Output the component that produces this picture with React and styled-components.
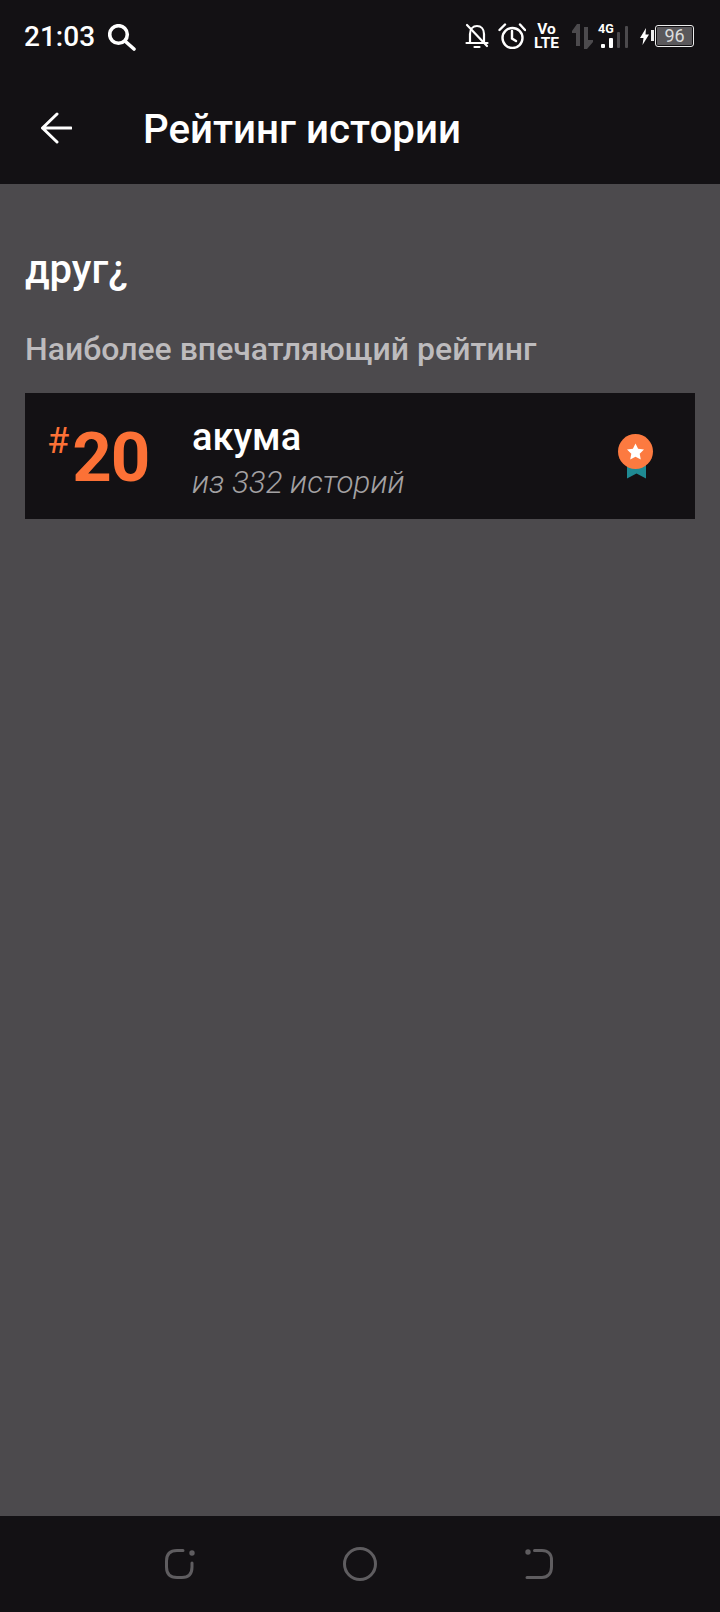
import React from "react";
import styled, { createGlobalStyle } from "styled-components";

const GlobalStyle = createGlobalStyle`
  html, body {
    margin: 0;
    padding: 0;
    background: #4c4a4d;
  }
  body {
    font-family: Roboto, "Noto Sans", sans-serif;
  }
`;

const Page = styled.div`
  width: 720px;
  height: 1612px;
  display: flex;
  flex-direction: column;
  background: #4c4a4d;
  overflow: hidden;
`;

const Top = styled.div`
  height: 184px;
  flex: none;
  background: #131114;
  display: flex;
  flex-direction: column;
`;

const StatusBar = styled.div`
  height: 74px;
  flex: none;
  padding: 0 26px 0 24px;
  display: flex;
  align-items: center;
  justify-content: space-between;
`;

const StatusLeft = styled.div`
  display: flex;
  align-items: center;
  gap: 13px;
`;

const Clock = styled.span`
  color: #fff;
  font-size: 28px;
  font-weight: 500;
  line-height: 32px;
`;

const StatusRight = styled.div`
  display: flex;
  align-items: center;
  margin-bottom: 2px;
`;

const StatusIcon = styled.svg`
  display: block;
  flex: none;
  margin-left: ${(p) => p.$gap || 0}px;
`;

const Volte = styled.div`
  margin-left: 7px;
  width: 27px;
  color: #fff;
  font-size: 15.5px;
  font-weight: 700;
  line-height: 14px;
  text-align: center;
`;

const Signal = styled.div`
  margin-left: 5px;
  width: 30px;
  display: flex;
  flex-direction: column;
  color: #fff;
`;

const SignalLabel = styled.span`
  font-size: 12.5px;
  font-weight: 700;
  line-height: 11px;
`;

const SignalBars = styled.svg`
  display: block;
  margin-top: -8px;
`;

const Battery = styled.div`
  margin-left: 6px;
  position: relative;
  width: 39px;
  height: 22px;
  box-sizing: border-box;
  border: 1.5px solid #eee;
  border-radius: 3px;
  padding: 1px;
  display: flex;

  &::before {
    content: "";
    position: absolute;
    left: -5px;
    top: 4px;
    width: 3px;
    height: 11px;
    background: #eee;
  }
`;

const BatteryFill = styled.div`
  flex: 1;
  background: #5a585b;
  border-radius: 1px;
  color: #ddd;
  font-size: 18px;
  line-height: 17px;
  text-align: center;
`;

const AppBar = styled.div`
  flex: 1;
  display: flex;
  align-items: center;
  padding-left: 40px;
`;

const BackIcon = styled.svg`
  display: block;
  flex: none;
  margin-bottom: 2px;
`;

const Title = styled.h1`
  margin: 2px 0 0 71px;
  color: #fff;
  font-size: 40.3px;
  font-weight: 500;
  line-height: 44px;
`;

const Content = styled.main`
  flex: 1;
  padding: 64px 25px 0;
`;

const StoryName = styled.h2`
  margin: 0;
  color: #fff;
  font-size: 40px;
  font-weight: 500;
  line-height: 44px;
`;

const Caption = styled.div`
  margin-top: 39px;
  color: #bdbbbd;
  font-size: 32px;
  font-weight: 500;
  line-height: 36px;
`;

const RankCard = styled.div`
  margin-top: 26px;
  height: 126px;
  background: #131114;
  display: flex;
  align-items: center;
`;

const Rank = styled.div`
  width: 167px;
  flex: none;
  align-self: stretch;
  padding: 25px 0 0 22px;
  box-sizing: border-box;
  display: flex;
  align-items: flex-start;
  color: #fc7136;
`;

const Hash = styled.span`
  font-size: 36px;
  line-height: 40px;
  margin-top: 3px;
`;

const RankNumber = styled.span`
  font-size: 69px;
  font-weight: 700;
  line-height: 80px;
  letter-spacing: -1px;
  margin-left: 3px;
`;

const RankText = styled.div`
  flex: 1;
  padding-top: 3px;
`;

const Category = styled.div`
  color: #fff;
  font-size: 38px;
  font-weight: 500;
  line-height: 44px;
`;

const Total = styled.div`
  color: #a3a1a3;
  font-size: 31.3px;
  font-weight: 300;
  font-style: italic;
  line-height: 36px;
  margin-top: 6px;
`;

const Medal = styled.svg`
  flex: none;
  margin-right: 41px;
`;

const NavBar = styled.nav`
  height: 96px;
  flex: none;
  box-sizing: border-box;
  padding-right: 2px;
  background: #131114;
  display: flex;
  align-items: center;
  justify-content: center;
  gap: 148px;
`;

const BellOff = () => (
  <StatusIcon width="24" height="26" viewBox="0 0 24 26" fill="none" stroke="#fff" strokeWidth="2.2" strokeLinecap="round">
    <path d="M5 20V11c0-5 3-8 7-8s7 3 7 8v9M1.500 20h21M9.500 24h5" />
    <path d="M2 2l20 21" />
  </StatusIcon>
);

const Alarm = () => (
  <StatusIcon $gap={9} width="28" height="26" viewBox="0 0 28 26" fill="none" stroke="#fff" strokeWidth="2.4" strokeLinecap="round">
    <circle cx="14.500" cy="15" r="10" />
    <path d="M14 8v7.500l4 2.500M1.500 7L7 1.500M22 1.500L27 7" />
  </StatusIcon>
);

const DataArrows = () => (
  <StatusIcon $gap={12} width="21" height="25" viewBox="0 0 21 25" fill="#4c4a4d">
    <path d="M5 0L0 7v2h4v13h4V0zM12 3h4v13h5v2l-6 7h-3z" />
  </StatusIcon>
);

const Bolt = () => (
  <StatusIcon $gap={12} width="9" height="17" viewBox="0 0 9 17" fill="#fff">
    <path d="M6 0L0 10h3.500L2.500 17 9 6.500H5.500z" />
  </StatusIcon>
);

const App = () => {
  return (
    <Page>
      <GlobalStyle />
      <Top>
        <StatusBar>
          <StatusLeft>
            <Clock>21:03</Clock>
            <svg width="28" height="27" viewBox="0 0 28 27" fill="none" stroke="#fff" strokeWidth="3.6" strokeLinecap="round">
              <circle cx="10.500" cy="10.500" r="8.800" />
              <path d="M17.500 17.500l8.500 7.500" />
            </svg>
          </StatusLeft>
          <StatusRight>
            <BellOff />
            <Alarm />
            <Volte>Vo LTE</Volte>
            <DataArrows />
            <Signal>
              <SignalLabel>4G</SignalLabel>
              <SignalBars width="30" height="23" viewBox="0 0 30 23">
                <rect x="3" y="18" width="4" height="4" rx="1" fill="#fff" />
                <rect x="11" y="12" width="4" height="10" rx="1" fill="#fff" />
                <rect x="19" y="6" width="3" height="16" rx="1" fill="#4c4a4d" />
                <rect x="27" y="0" width="3" height="22" rx="1" fill="#4c4a4d" />
              </SignalBars>
            </Signal>
            <Bolt />
            <Battery>
              <BatteryFill>96</BatteryFill>
            </Battery>
          </StatusRight>
        </StatusBar>
        <AppBar>
          <BackIcon width="32" height="32" viewBox="0 0 32 32" fill="none" stroke="#fff" strokeWidth="3" strokeLinecap="round" strokeLinejoin="round">
            <path d="M31 16H2.500M17 2L2.500 16 17 30" />
          </BackIcon>
          <Title>Рейтинг истории</Title>
        </AppBar>
      </Top>
      <Content>
        <StoryName>друг¿</StoryName>
        <Caption>Наиболее впечатляющий рейтинг</Caption>
        <RankCard>
          <Rank>
            <Hash>#</Hash>
            <RankNumber>20</RankNumber>
          </Rank>
          <RankText>
            <Category>акума</Category>
            <Total>из 332 историй</Total>
          </RankText>
          <Medal width="36" height="45" viewBox="0 0 36 45">
            <path d="M9 28h19v16.500l-9.500-5-9.500 5z" fill="#1f8a93" />
            <circle cx="17.500" cy="17.500" r="17.500" fill="#fc7a40" />
            <path d="M17.500 9.500l2.600 5.300 5.900.8-4.300 4.100 1.100 5.800-5.300-2.800-5.300 2.800 1.100-5.800-4.300-4.100 5.900-.8z" fill="#fff" />
          </Medal>
        </RankCard>
      </Content>
      <NavBar>
        <svg width="30" height="30" viewBox="0 0 30 30" fill="none" stroke="#5f5d60" strokeWidth="3" strokeLinecap="round">
          <path d="M18 1.500h-6C5 1.500 1.500 5 1.500 12v6c0 7 3.500 10.500 10.500 10.500h5c6.500 0 10-3.500 10-10.500v-4" />
          <circle cx="27" cy="4" r="1.200" fill="#5f5d60" />
        </svg>
        <svg width="34" height="34" viewBox="0 0 34 34" fill="none" stroke="#5f5d60" strokeWidth="3">
          <circle cx="17" cy="17" r="15.500" />
        </svg>
        <svg width="28" height="30" viewBox="0 0 28 30" fill="none" stroke="#5f5d60" strokeWidth="3" strokeLinecap="round">
          <path d="M9.500 1.500H17c6 0 9.500 3.500 9.500 9.500v7c0 6-3.500 10.500-9.500 10.500H2" />
          <circle cx="3" cy="3" r="1.200" fill="#5f5d60" />
        </svg>
      </NavBar>
    </Page>
  );
};

export default App;
